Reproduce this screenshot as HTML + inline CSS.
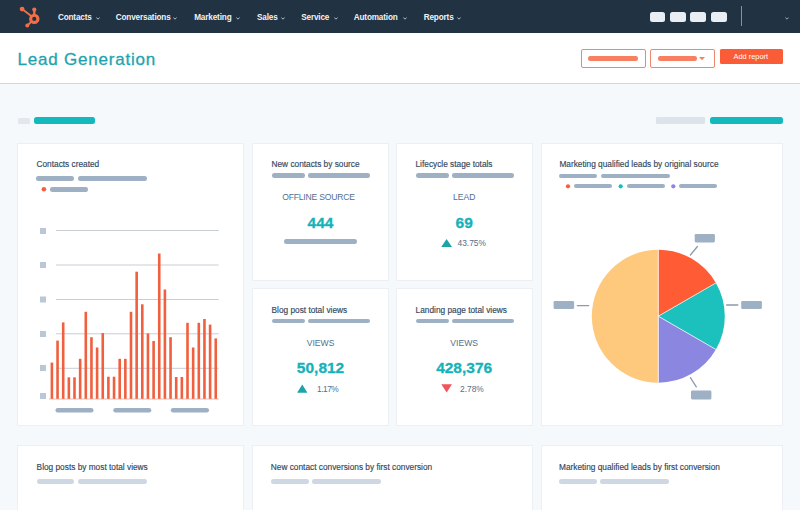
<!DOCTYPE html>
<html><head><meta charset="utf-8">
<style>
*{margin:0;padding:0;box-sizing:border-box}
html,body{width:800px;height:510px;overflow:hidden;background:#f6f9fb;font-family:"Liberation Sans",sans-serif;position:relative}
.a{position:absolute}
.t{position:absolute;white-space:nowrap;line-height:1}
#nav{left:0;top:0;width:800px;height:33px;background:#213343}
.nv{color:#eef2f6;font-size:8.2px;font-weight:700;top:14.1px;letter-spacing:-0.15px}
.chev{position:absolute;width:4px;height:3px;top:16.6px}
.nb{position:absolute;top:11.5px;width:15.5px;height:10.5px;background:#e8eef4;border-radius:2.5px}
#hdr{left:0;top:33px;width:800px;height:51px;background:#fff;border-bottom:1px solid #d3d7dc}
.card{position:absolute;background:#fff;border:1px solid #eceff3}
.ttl{color:#33475b;font-size:8.3px;-webkit-text-stroke:0.15px #33475b}
.bar{position:absolute;height:4.5px;border-radius:2.3px;background:#9eb0c3}
.lbar{position:absolute;height:4.5px;border-radius:2.3px;background:#cfd8e2}
.kl{color:#516f90;font-size:8.6px}
.kv{color:#16b2b9;font-size:15.5px;font-weight:700;-webkit-text-stroke:0.3px #16b2b9}
.kp{color:#516f90;font-size:8.4px}
.dot{position:absolute;border-radius:50%}
</style></head><body>
<div id="nav" class="a">
  <svg class="a" style="left:0;top:0" width="60" height="33" viewBox="0 0 60 33">
    <g fill="#f36d47" stroke="#f36d47">
      <circle cx="34.3" cy="18.9" r="3.65" fill="none" stroke-width="3.1"/>
      <line x1="34.3" y1="15" x2="34.3" y2="10" stroke-width="2.3"/>
      <circle cx="34.3" cy="9.6" r="2.1" stroke="none"/>
      <line x1="22.1" y1="9.1" x2="31.5" y2="16.3" stroke-width="1.9"/>
      <circle cx="22.1" cy="9.1" r="2.4" stroke="none"/>
      <line x1="27.3" y1="25.5" x2="31.3" y2="21.8" stroke-width="1.9"/>
      <circle cx="27.3" cy="25.5" r="2" stroke="none"/>
    </g>
  </svg>
  <div class="t nv" style="left:57.9px">Contacts</div><svg class="chev" style="left:95.6px" width="4" height="3" viewBox="0 0 4 3"><path d="M0.4 0.5L2 2.2L3.6 0.5" fill="none" stroke="#c4ced9" stroke-width="0.9"/></svg>
  <div class="t nv" style="left:115.7px">Conversations</div><svg class="chev" style="left:173.3px" width="4" height="3" viewBox="0 0 4 3"><path d="M0.4 0.5L2 2.2L3.6 0.5" fill="none" stroke="#c4ced9" stroke-width="0.9"/></svg>
  <div class="t nv" style="left:194.2px">Marketing</div><svg class="chev" style="left:236.3px" width="4" height="3" viewBox="0 0 4 3"><path d="M0.4 0.5L2 2.2L3.6 0.5" fill="none" stroke="#c4ced9" stroke-width="0.9"/></svg>
  <div class="t nv" style="left:257px">Sales</div><svg class="chev" style="left:281.3px" width="4" height="3" viewBox="0 0 4 3"><path d="M0.4 0.5L2 2.2L3.6 0.5" fill="none" stroke="#c4ced9" stroke-width="0.9"/></svg>
  <div class="t nv" style="left:301.2px">Service</div><svg class="chev" style="left:333.8px" width="4" height="3" viewBox="0 0 4 3"><path d="M0.4 0.5L2 2.2L3.6 0.5" fill="none" stroke="#c4ced9" stroke-width="0.9"/></svg>
  <div class="t nv" style="left:353.7px">Automation</div><svg class="chev" style="left:403.3px" width="4" height="3" viewBox="0 0 4 3"><path d="M0.4 0.5L2 2.2L3.6 0.5" fill="none" stroke="#c4ced9" stroke-width="0.9"/></svg>
  <div class="t nv" style="left:423.7px">Reports</div><svg class="chev" style="left:457.3px" width="4" height="3" viewBox="0 0 4 3"><path d="M0.4 0.5L2 2.2L3.6 0.5" fill="none" stroke="#c4ced9" stroke-width="0.9"/></svg>
  <div class="nb" style="left:649.6px"></div>
  <div class="nb" style="left:670.4px"></div>
  <div class="nb" style="left:690.4px"></div>
  <div class="nb" style="left:711px"></div>
  <div class="a" style="left:740.5px;top:6.4px;width:1px;height:19.6px;background:#8193a6"></div>
  <svg class="chev" style="left:785px;top:16.5px" width="5" height="3.5" viewBox="0 0 5 3.5"><path d="M0.5 0.6L2.5 2.6L4.5 0.6" fill="none" stroke="#c4ced9" stroke-width="1"/></svg>
</div>

<div id="hdr" class="a">
  <div class="t" style="left:17.4px;top:18.3px;font-size:17px;letter-spacing:0.8px;color:#1ea4ad;-webkit-text-stroke:0.3px #1ea4ad">Lead Generation</div>
  <div class="a" style="left:581px;top:16.3px;width:64.5px;height:18.3px;border:1px solid #f0876a;border-radius:2px;background:#fff"></div>
  <div class="a" style="left:588.4px;top:23.3px;width:50px;height:4.6px;border-radius:2.3px;background:#f6805f"></div>
  <div class="a" style="left:650.4px;top:16.1px;width:64.2px;height:18.5px;border:1px solid #f0876a;border-radius:2px;background:#fff"></div>
  <div class="a" style="left:658px;top:23.3px;width:39px;height:4.6px;border-radius:2.3px;background:#f6805f"></div>
  <svg class="a" style="left:699px;top:24px" width="6" height="4" viewBox="0 0 6 4"><path d="M0 0H6L3 3.3Z" fill="#f6805f"/></svg>
  <div class="a" style="left:719.7px;top:16.1px;width:63px;height:14.8px;background:#fa5c37;border-radius:1.5px"></div>
  <div class="t" style="left:733.5px;top:20px;font-size:7.4px;color:#fff">Add report</div>
</div>

<!-- toolbar -->
<div class="a" style="left:17.6px;top:117.6px;width:12.3px;height:6.3px;border-radius:1.5px;background:#e2e7ec"></div>
<div class="a" style="left:34.2px;top:117px;width:60.8px;height:7px;border-radius:2.5px;background:#14b9be"></div>
<div class="a" style="left:655.6px;top:117px;width:49.4px;height:7px;border-radius:1.2px;background:#dde3ea"></div>
<div class="a" style="left:710px;top:117px;width:72.5px;height:7px;border-radius:2.5px;background:#14b9be"></div>

<!-- cards -->
<div class="card" style="left:17px;top:143px;width:227px;height:283px"></div>
<div class="card" style="left:252px;top:143px;width:137px;height:138px"></div>
<div class="card" style="left:396px;top:143px;width:137px;height:138px"></div>
<div class="card" style="left:252px;top:288px;width:137px;height:138px"></div>
<div class="card" style="left:396px;top:288px;width:137px;height:138px"></div>
<div class="card" style="left:541px;top:143px;width:242px;height:283px"></div>
<div class="card" style="left:17px;top:445px;width:227px;height:80px"></div>
<div class="card" style="left:252px;top:445px;width:281px;height:80px"></div>
<div class="card" style="left:541px;top:445px;width:242px;height:80px"></div>

<!-- svg overlay -->
<svg class="a" style="left:0;top:0" width="800" height="510" viewBox="0 0 800 510">
  <g fill="#bac7d5">
    <rect x="40" y="228" width="6" height="6"/>
    <rect x="40" y="262" width="6" height="6"/>
    <rect x="40" y="296.5" width="6" height="6"/>
    <rect x="40" y="331" width="6" height="6"/>
    <rect x="40" y="365" width="6" height="6"/>
    <rect x="40" y="393" width="6" height="6"/>
  </g>
  <g stroke="#c8ced5" stroke-width="1">
    <line x1="56" y1="230.5" x2="218.7" y2="230.5"/>
    <line x1="56" y1="265" x2="218.7" y2="265"/>
    <line x1="56" y1="299.5" x2="218.7" y2="299.5"/>
    <line x1="56" y1="333.8" x2="218.7" y2="333.8"/>
    <line x1="56" y1="368.3" x2="218.7" y2="368.3"/>
  </g>
  <g fill="#f0603f">
<rect x="50.60" y="362.6" width="2.6" height="36.4"/>
<rect x="56.25" y="340.6" width="2.6" height="58.4"/>
<rect x="61.90" y="322.4" width="2.6" height="76.6"/>
<rect x="67.55" y="377.3" width="2.6" height="21.7"/>
<rect x="73.20" y="377.3" width="2.6" height="21.7"/>
<rect x="78.85" y="358.8" width="2.6" height="40.2"/>
<rect x="84.50" y="311.8" width="2.6" height="87.2"/>
<rect x="90.15" y="337.2" width="2.6" height="61.8"/>
<rect x="95.80" y="347.5" width="2.6" height="51.5"/>
<rect x="101.45" y="333.1" width="2.6" height="65.9"/>
<rect x="107.10" y="376.7" width="2.6" height="22.3"/>
<rect x="112.75" y="376.7" width="2.6" height="22.3"/>
<rect x="118.40" y="358.8" width="2.6" height="40.2"/>
<rect x="124.05" y="358.8" width="2.6" height="40.2"/>
<rect x="129.70" y="311.8" width="2.6" height="87.2"/>
<rect x="135.35" y="271.7" width="2.6" height="127.3"/>
<rect x="141.00" y="304.3" width="2.6" height="94.7"/>
<rect x="146.65" y="333.4" width="2.6" height="65.6"/>
<rect x="152.30" y="341.0" width="2.6" height="58.0"/>
<rect x="157.95" y="253.5" width="2.6" height="145.5"/>
<rect x="163.60" y="289.5" width="2.6" height="109.5"/>
<rect x="169.25" y="337.2" width="2.6" height="61.8"/>
<rect x="174.90" y="377.0" width="2.6" height="22.0"/>
<rect x="180.55" y="377.0" width="2.6" height="22.0"/>
<rect x="186.20" y="322.8" width="2.6" height="76.2"/>
<rect x="191.85" y="347.5" width="2.6" height="51.5"/>
<rect x="197.50" y="322.8" width="2.6" height="76.2"/>
<rect x="203.15" y="319.0" width="2.6" height="80.0"/>
<rect x="208.80" y="324.6" width="2.6" height="74.4"/>
<rect x="214.45" y="338.4" width="2.6" height="60.6"/>
  </g>
  <line x1="49" y1="399" x2="218.7" y2="399" stroke="#f4a58f" stroke-width="0.8"/>
  <g fill="#9eb0c3">
    <rect x="55.5" y="408" width="38" height="4.5" rx="2.25"/>
    <rect x="113.3" y="408" width="38" height="4.5" rx="2.25"/>
    <rect x="170.8" y="408" width="38.2" height="4.5" rx="2.25"/>
  </g>
  <!-- pie -->
<path d="M658.3 316.2L658.30 249.70A66.5 66.5 0 0 1 715.89 282.95Z" fill="#ff5c35"/>
<path d="M658.3 316.2L715.89 282.95A66.5 66.5 0 0 1 715.89 349.45Z" fill="#1cc0bd"/>
<path d="M658.3 316.2L715.89 349.45A66.5 66.5 0 0 1 658.30 382.70Z" fill="#8b87e0"/>
<path d="M658.3 316.2L658.30 382.70A66.5 66.5 0 0 1 658.30 249.70Z" fill="#ffc97d"/>
  <g stroke="#fff" stroke-width="0.7"><line x1="658.3" y1="316.2" x2="658.30" y2="249.70"/><line x1="658.3" y1="316.2" x2="715.89" y2="282.95"/><line x1="658.3" y1="316.2" x2="715.89" y2="349.45"/><line x1="658.3" y1="316.2" x2="658.30" y2="382.70"/></g>
  <g fill="#9eb0c3">
    <rect x="694.7" y="234" width="20.2" height="8.4" rx="1.3"/>
    <rect x="741.2" y="300.9" width="20.7" height="8.2" rx="1.3"/>
    <rect x="553.6" y="300.9" width="20.5" height="8.2" rx="1.3"/>
    <rect x="691" y="390.5" width="20.4" height="8.9" rx="1.3"/>
  </g>
  <g stroke="#8b9bb0" stroke-width="1.3" stroke-linecap="round">
    <line x1="690.4" y1="255" x2="697.4" y2="246.5"/>
    <line x1="726.6" y1="305" x2="737.8" y2="305"/>
    <line x1="577.3" y1="305.6" x2="588.7" y2="305.6"/>
    <line x1="690.4" y1="377.6" x2="696.3" y2="386.9"/>
  </g>
  <circle cx="43.9" cy="189.3" r="2.3" fill="#f2603d"/>
  <circle cx="568" cy="186.3" r="2.1" fill="#f2603d"/>
  <circle cx="620.7" cy="186.3" r="2.1" fill="#17bcbf"/>
  <circle cx="673.3" cy="186.3" r="2.1" fill="#8b87e0"/>
  <!-- triangles -->
  <path d="M441.25 247H452L446.6 239Z" fill="#1ba5a7"/>
  <path d="M297.1 392.7H307.4L302.25 384.5Z" fill="#1ba5a7"/>
  <path d="M441.3 384.2H452L446.65 392.4Z" fill="#f2545b"/>
</svg>

<!-- card 1 -->
<div class="t ttl" style="left:36.5px;top:160px">Contacts created</div>
<div class="bar" style="left:36.4px;top:176.3px;width:38.1px"></div>
<div class="bar" style="left:78px;top:176.3px;width:69px"></div>
<div class="bar" style="left:50.4px;top:187.1px;width:37.6px"></div>

<!-- card 2 -->
<div class="t ttl" style="left:271.5px;top:160px">New contacts by source</div>
<div class="bar" style="left:271.5px;top:173.4px;width:33.6px"></div>
<div class="bar" style="left:308.1px;top:173.4px;width:61.8px"></div>
<div class="t kl" style="left:250.4px;width:136.3px;text-align:center;top:193px;letter-spacing:-0.2px">OFFLINE SOURCE</div>
<div class="t kv" style="left:252.4px;width:136.3px;text-align:center;top:215px">444</div>
<div class="bar" style="left:284px;top:239.4px;width:72.5px"></div>

<!-- card 3 -->
<div class="t ttl" style="left:415.5px;top:160px">Lifecycle stage totals</div>
<div class="bar" style="left:415.5px;top:173.4px;width:33.5px"></div>
<div class="bar" style="left:452.2px;top:173.4px;width:61.8px"></div>
<div class="t kl" style="left:395.9px;width:136.5px;text-align:center;top:193px">LEAD</div>
<div class="t kv" style="left:395.9px;width:136.5px;text-align:center;top:215px">69</div>
<div class="t kp" style="left:457.5px;top:239px">43.75%</div>

<!-- card 5 -->
<div class="t ttl" style="left:271.5px;top:305.5px">Blog post total views</div>
<div class="bar" style="left:271.5px;top:318.6px;width:33.4px"></div>
<div class="bar" style="left:308.3px;top:318.6px;width:61.4px"></div>
<div class="t kl" style="left:252.4px;width:136.3px;text-align:center;top:339px">VIEWS</div>
<div class="t kv" style="left:252.4px;width:136.3px;text-align:center;top:360px">50,812</div>
<div class="t kp" style="left:317px;top:385px;letter-spacing:-0.5px">1.17%</div>

<!-- card 6 -->
<div class="t ttl" style="left:415.6px;top:305.5px">Landing page total views</div>
<div class="bar" style="left:415.6px;top:318.6px;width:33.4px"></div>
<div class="bar" style="left:452.4px;top:318.6px;width:61.4px"></div>
<div class="t kl" style="left:395.9px;width:136.5px;text-align:center;top:339px">VIEWS</div>
<div class="t kv" style="left:395.9px;width:136.5px;text-align:center;top:360px">428,376</div>
<div class="t kp" style="left:460px;top:385px">2.78%</div>

<!-- card 4 -->
<div class="t ttl" style="left:559.4px;top:160px">Marketing qualified leads by original source</div>
<div class="bar" style="left:559px;top:173.6px;width:38.2px"></div>
<div class="bar" style="left:600.9px;top:173.6px;width:68.8px"></div>
<div class="bar" style="left:573.6px;top:184.2px;width:38.3px;height:4.3px"></div>
<div class="bar" style="left:626.5px;top:184.2px;width:38.2px;height:4.3px"></div>
<div class="bar" style="left:679.2px;top:184.2px;width:38.2px;height:4.3px"></div>

<!-- bottom row -->
<div class="t ttl" style="left:36.6px;top:463px">Blog posts by most total views</div>
<div class="lbar" style="left:36.6px;top:479px;width:37.8px"></div>
<div class="lbar" style="left:78px;top:479px;width:69px"></div>
<div class="t ttl" style="left:270.8px;top:463px">New contact conversions by first conversion</div>
<div class="lbar" style="left:270.8px;top:479px;width:38px"></div>
<div class="lbar" style="left:312px;top:479px;width:69.2px"></div>
<div class="t ttl" style="left:559px;top:463px">Marketing qualified leads by first conversion</div>
<div class="lbar" style="left:559px;top:479px;width:38px"></div>
<div class="lbar" style="left:600px;top:479px;width:69px"></div>

</body></html>
